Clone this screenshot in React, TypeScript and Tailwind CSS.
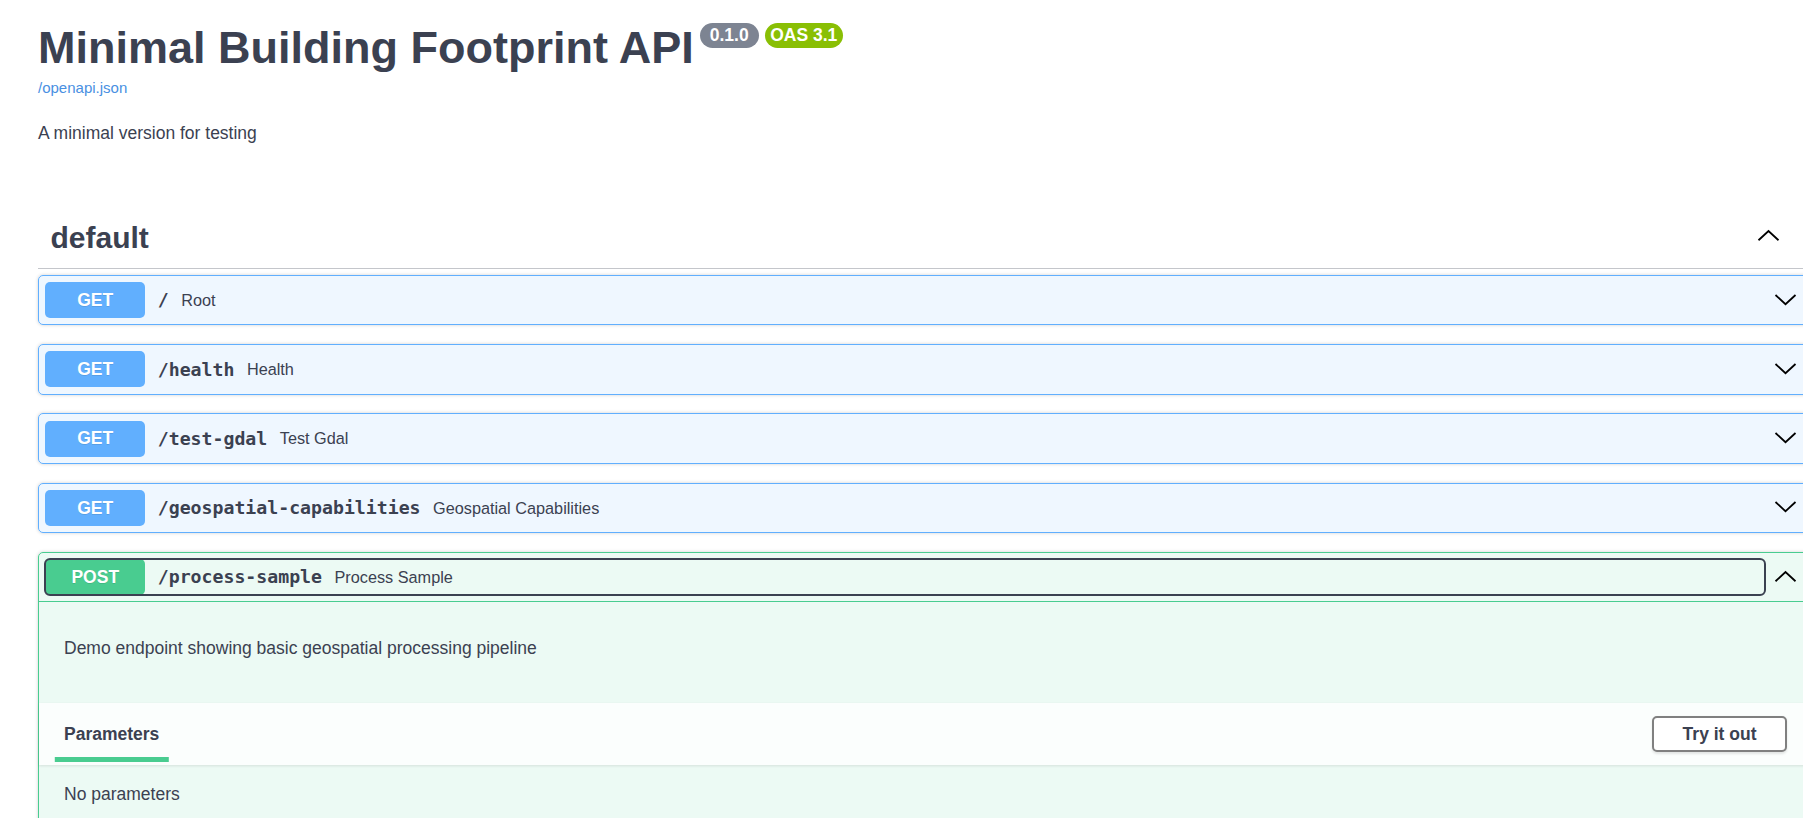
import React from "react";

const sans = "font-['Liberation_Sans',Arial,sans-serif]";
const mono = "font-['DejaVu_Sans_Mono','Liberation_Mono',monospace]";

function Chevron({ up, className = "" }: { up?: boolean; className?: string }) {
  return (
    <svg width="25" height="25" viewBox="0 0 20 20" className={`shrink-0 ${className}`} aria-hidden="true">
      <path
        d={up ? "M2 13 L10 5.6 L18 13" : "M2 5.6 L10 13 L18 5.6"}
        fill="none"
        stroke="#000"
        strokeWidth="1.4"
      />
    </svg>
  );
}

const endpoints = [
  { path: "/", summary: "Root" },
  { path: "/health", summary: "Health" },
  { path: "/test-gdal", summary: "Test Gdal" },
  { path: "/geospatial-capabilities", summary: "Geospatial Capabilities" },
];

function GetBlock({ path, summary }: { path: string; summary: string }) {
  return (
    <div className="rounded-[5px] border border-[#61affe] bg-[rgba(97,175,254,0.1)] shadow-[0_0_3.75px_rgba(0,0,0,0.19)]">
      <div className="flex items-center p-[6.25px]">
        <div className="flex flex-1 items-center min-w-0">
          <span className="flex h-[36px] w-[100px] items-center justify-center rounded-[5px] bg-[#61affe] text-[17.5px] font-bold text-white [text-shadow:0_1px_0_rgba(0,0,0,0.1)]">
            GET
          </span>
          <span className={`${mono} px-[12.5px] text-[18.2px] font-bold`}>{path}</span>
          <span className="text-[16.25px]">{summary}</span>
        </div>
        <Chevron className="ml-[8px] mr-[7.75px]" />
      </div>
    </div>
  );
}

function PostBlock() {
  return (
    <div className="rounded-[5px] border border-[#49cc90] bg-[rgba(73,204,144,0.1)] shadow-[0_0_3.75px_rgba(0,0,0,0.19)]">
      <div className="flex items-center border-b border-[#49cc90] p-[6.25px]">
        <div className="flex flex-1 items-center min-w-0 rounded-[5px] outline-2 -outline-offset-1 outline-[#3b4151]">
          <span className="flex h-[36px] w-[100px] items-center justify-center rounded-[5px] bg-[#49cc90] text-[17.5px] font-bold text-white [text-shadow:0_1px_0_rgba(0,0,0,0.1)]">
            POST
          </span>
          <span className={`${mono} px-[12.5px] text-[18.2px] font-bold`}>/process-sample</span>
          <span className="text-[16.25px]">Process Sample</span>
        </div>
        <Chevron up className="ml-[8px] mr-[7.75px]" />
      </div>

      <div className="px-[25px] pt-[35px] pb-[43.5px] text-[17.5px] leading-[22px]">
        Demo endpoint showing basic geospatial processing pipeline
      </div>

      <div className="flex min-h-[62.5px] items-center justify-between bg-[rgba(255,255,255,0.8)] px-[25px] shadow-[0_1.25px_2.5px_rgba(0,0,0,0.1)]">
        <h4 className="relative text-[17.5px] leading-[20px] font-bold">
          Parameters
          <span className="absolute left-1/2 -bottom-[17.75px] h-[5px] w-[120%] -translate-x-1/2 bg-[#49cc90]" />
        </h4>
        <button className="rounded-[5px] border-[2.5px] border-[#808080] bg-white px-[28.5px] py-[6.25px] text-[17.5px] leading-[20px] font-bold text-[#3b4151] shadow-[0_1.25px_2.5px_rgba(0,0,0,0.1)]">
          Try it out
        </button>
      </div>

      <div className="px-[25px] pt-[18.75px] pb-[120px] text-[17.5px] leading-[20px]">No parameters</div>
    </div>
  );
}

export default function App() {
  return (
    <div className={`${sans} h-[818px] w-[1803px] overflow-hidden bg-white text-[#3b4151]`}>
      <div className="ml-[38px] w-[1775px]">
        {/* info */}
        <div className="pt-[22px]">
          <div className="flex items-start">
            <h2 className="text-[45px] leading-[52px] font-bold">Minimal Building Footprint API</h2>
            <span className="ml-[6px] mt-[0.5px] rounded-full bg-[#7d8492] px-[10px] py-[2.5px] text-[17.5px] leading-[20px] font-bold text-white">
              0.1.0
            </span>
            <span className="ml-[6px] mt-[0.5px] rounded-full bg-[#89bf04] px-[5.5px] py-[2.5px] text-[17.5px] leading-[20px] font-bold text-white">
              OAS 3.1
            </span>
          </div>
          <a className="mt-[5px] block w-fit text-[15px] leading-[18px] text-[#4990e2]" href="#">
            /openapi.json
          </a>
          <p className="mt-[25px] text-[17.5px] leading-[22px]">A minimal version for testing</p>
        </div>

        {/* tag section */}
        <section className="mt-[64px]">
          <h3 className="flex items-center border-b border-[#c4c6cb] py-[12.5px] pl-[12.5px] pr-[32px]">
            <span className="flex-1 text-[30px] leading-[34.5px] font-bold">default</span>
            <Chevron up className="-mt-[2px]" />
          </h3>
          <div className="mt-[6.25px] flex flex-col gap-[18.75px]">
            {endpoints.map((e) => (
              <GetBlock key={e.path} path={e.path} summary={e.summary} />
            ))}
            <PostBlock />
          </div>
        </section>
      </div>
    </div>
  );
}
